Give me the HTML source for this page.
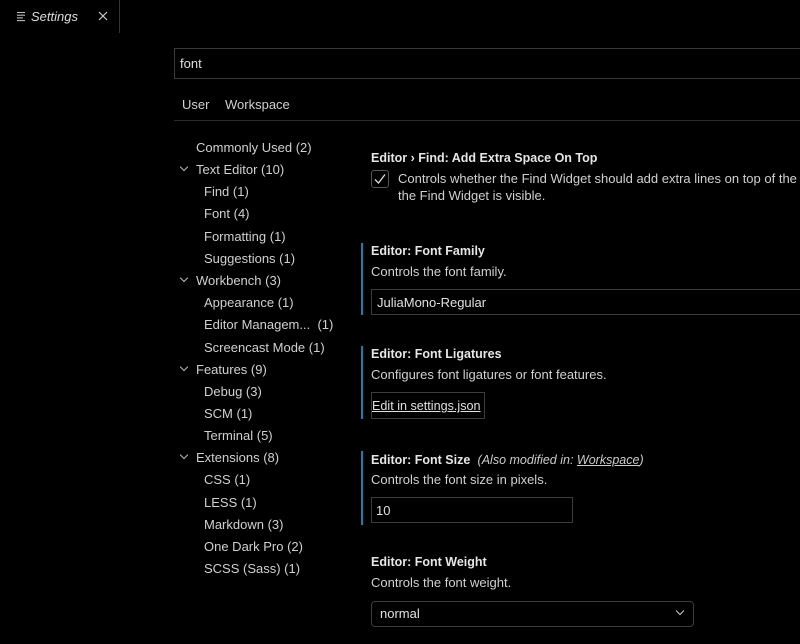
<!DOCTYPE html>
<html><head><meta charset="utf-8"><style>
*{margin:0;padding:0;box-sizing:border-box}
body{width:800px;height:644px;background:#000;color:#d0d0d0;font-family:"Liberation Sans",sans-serif;font-size:13px;position:relative;overflow:hidden}
.a{position:absolute;white-space:nowrap}
.t{line-height:16px}
.b{font-weight:bold;color:#e6e6e6;font-size:12.5px}
.bar{position:absolute;left:361px;width:2px;background:#1a7fa8}
.box{position:absolute;border:1px solid #3c3c3c}
.chev{position:absolute;width:6px;height:6px;border-right:1.3px solid #bbb;border-bottom:1.3px solid #bbb;transform:rotate(45deg)}
.tr{top:1px}
</style></head><body>
<div class="a" style="left:119px;top:0;width:1px;height:33px;background:#333"></div>
<svg class="a" style="left:16px;top:11px" width="11" height="11"><g stroke="#bbb" stroke-width="1.1"><line x1="1" y1="1.5" x2="9" y2="1.5"/><line x1="1" y1="4.2" x2="9" y2="4.2"/><line x1="1" y1="6.9" x2="7" y2="6.9"/><line x1="1" y1="9.6" x2="9" y2="9.6"/></g></svg>
<div class="a t" style="left:31px;top:9px;font-style:italic;font-size:13px;color:#ddd">Settings</div>
<svg class="a" style="left:98px;top:11px" width="10" height="10"><path d="M1 1L9 9M9 1L1 9" stroke="#ccc" stroke-width="1.2"/></svg>
<div class="box" style="left:174px;top:48px;width:640px;height:31px;border-color:#3a3a3a"></div>
<div class="a t" style="left:180px;top:56px;color:#e0e0e0">font</div>
<div class="a t" style="left:182px;top:97px">User</div>
<div class="a t" style="left:225px;top:97px">Workspace</div>
<div class="a" style="left:174px;top:120px;width:640px;height:1px;background:#2a2a2a"></div>

<div class="a t" style="left:196px;top:140px">Commonly Used (2)</div>
<div class="chev" style="left:181px;top:164px"></div>
<div class="a t" style="left:196px;top:162px">Text Editor (10)</div>
<div class="a t" style="left:204px;top:184px">Find (1)</div>
<div class="a t" style="left:204px;top:206px">Font (4)</div>
<div class="a t" style="left:204px;top:229px">Formatting (1)</div>
<div class="a t" style="left:204px;top:251px">Suggestions (1)</div>
<div class="chev" style="left:181px;top:275px"></div>
<div class="a t" style="left:196px;top:273px">Workbench (3)</div>
<div class="a t" style="left:204px;top:295px">Appearance (1)</div>
<div class="a t" style="left:204px;top:317px">Editor Managem...&nbsp; (1)</div>
<div class="a t" style="left:204px;top:340px">Screencast Mode (1)</div>
<div class="chev" style="left:181px;top:364px"></div>
<div class="a t" style="left:196px;top:362px">Features (9)</div>
<div class="a t" style="left:204px;top:384px">Debug (3)</div>
<div class="a t" style="left:204px;top:406px">SCM (1)</div>
<div class="a t" style="left:204px;top:428px">Terminal (5)</div>
<div class="chev" style="left:181px;top:452px"></div>
<div class="a t" style="left:196px;top:450px">Extensions (8)</div>
<div class="a t" style="left:204px;top:472px">CSS (1)</div>
<div class="a t" style="left:204px;top:495px">LESS (1)</div>
<div class="a t" style="left:204px;top:517px">Markdown (3)</div>
<div class="a t" style="left:204px;top:539px">One Dark Pro (2)</div>
<div class="a t" style="left:204px;top:561px">SCSS (Sass) (1)</div>

<div class="a t b" style="left:371px;top:150px">Editor › Find: Add Extra Space On Top</div>
<div class="box" style="left:371px;top:170px;width:18px;height:18px;border-radius:3px;border-color:#555"></div>
<svg class="a" style="left:373px;top:172px" width="14" height="14"><path d="M2 7.5L5.5 11L12 2.5" stroke="#ddd" stroke-width="1.3" fill="none"/></svg>
<div class="a t" style="left:398px;top:171px">Controls whether the Find Widget should add extra lines on top of the e</div>
<div class="a t" style="left:398px;top:188px">the Find Widget is visible.</div>

<div class="bar" style="top:243px;height:72px"></div>
<div class="a t b" style="left:371px;top:243px">Editor: Font Family</div>
<div class="a t" style="left:371px;top:264px">Controls the font family.</div>
<div class="box" style="left:371px;top:289px;width:440px;height:26px"></div>
<div class="a t" style="left:377px;top:295px;color:#e0e0e0">JuliaMono-Regular</div>

<div class="bar" style="top:346px;height:73px"></div>
<div class="a t b" style="left:371px;top:346px">Editor: Font Ligatures</div>
<div class="a t" style="left:371px;top:367px">Configures font ligatures or font features.</div>
<div class="box" style="left:371px;top:392px;width:114px;height:27px"></div>
<div class="a t" style="left:372px;top:398px;text-decoration:underline;color:#e0e0e0;font-size:12.6px">Edit in settings.json</div>

<div class="bar" style="top:451px;height:74px"></div>
<div class="a t" style="left:371px;top:452px"><span class="b">Editor: Font Size</span>&nbsp; <i style="color:#ccc;font-size:12.5px">(Also modified in: <u>Workspace</u>)</i></div>
<div class="a t" style="left:371px;top:472px">Controls the font size in pixels.</div>
<div class="box" style="left:371px;top:497px;width:202px;height:26px"></div>
<div class="a t" style="left:376px;top:503px;color:#e0e0e0">10</div>

<div class="a t b" style="left:371px;top:554px">Editor: Font Weight</div>
<div class="a t" style="left:371px;top:575px">Controls the font weight.</div>
<div class="box" style="left:371px;top:601px;width:323px;height:26px;border-radius:4px"></div>
<div class="a t" style="left:380px;top:606px;color:#e0e0e0">normal</div>
<svg class="a" style="left:675px;top:609px" width="10" height="7"><path d="M1 1.5L5 5.5L9 1.5" stroke="#bbb" stroke-width="1.2" fill="none"/></svg>
</body></html>
